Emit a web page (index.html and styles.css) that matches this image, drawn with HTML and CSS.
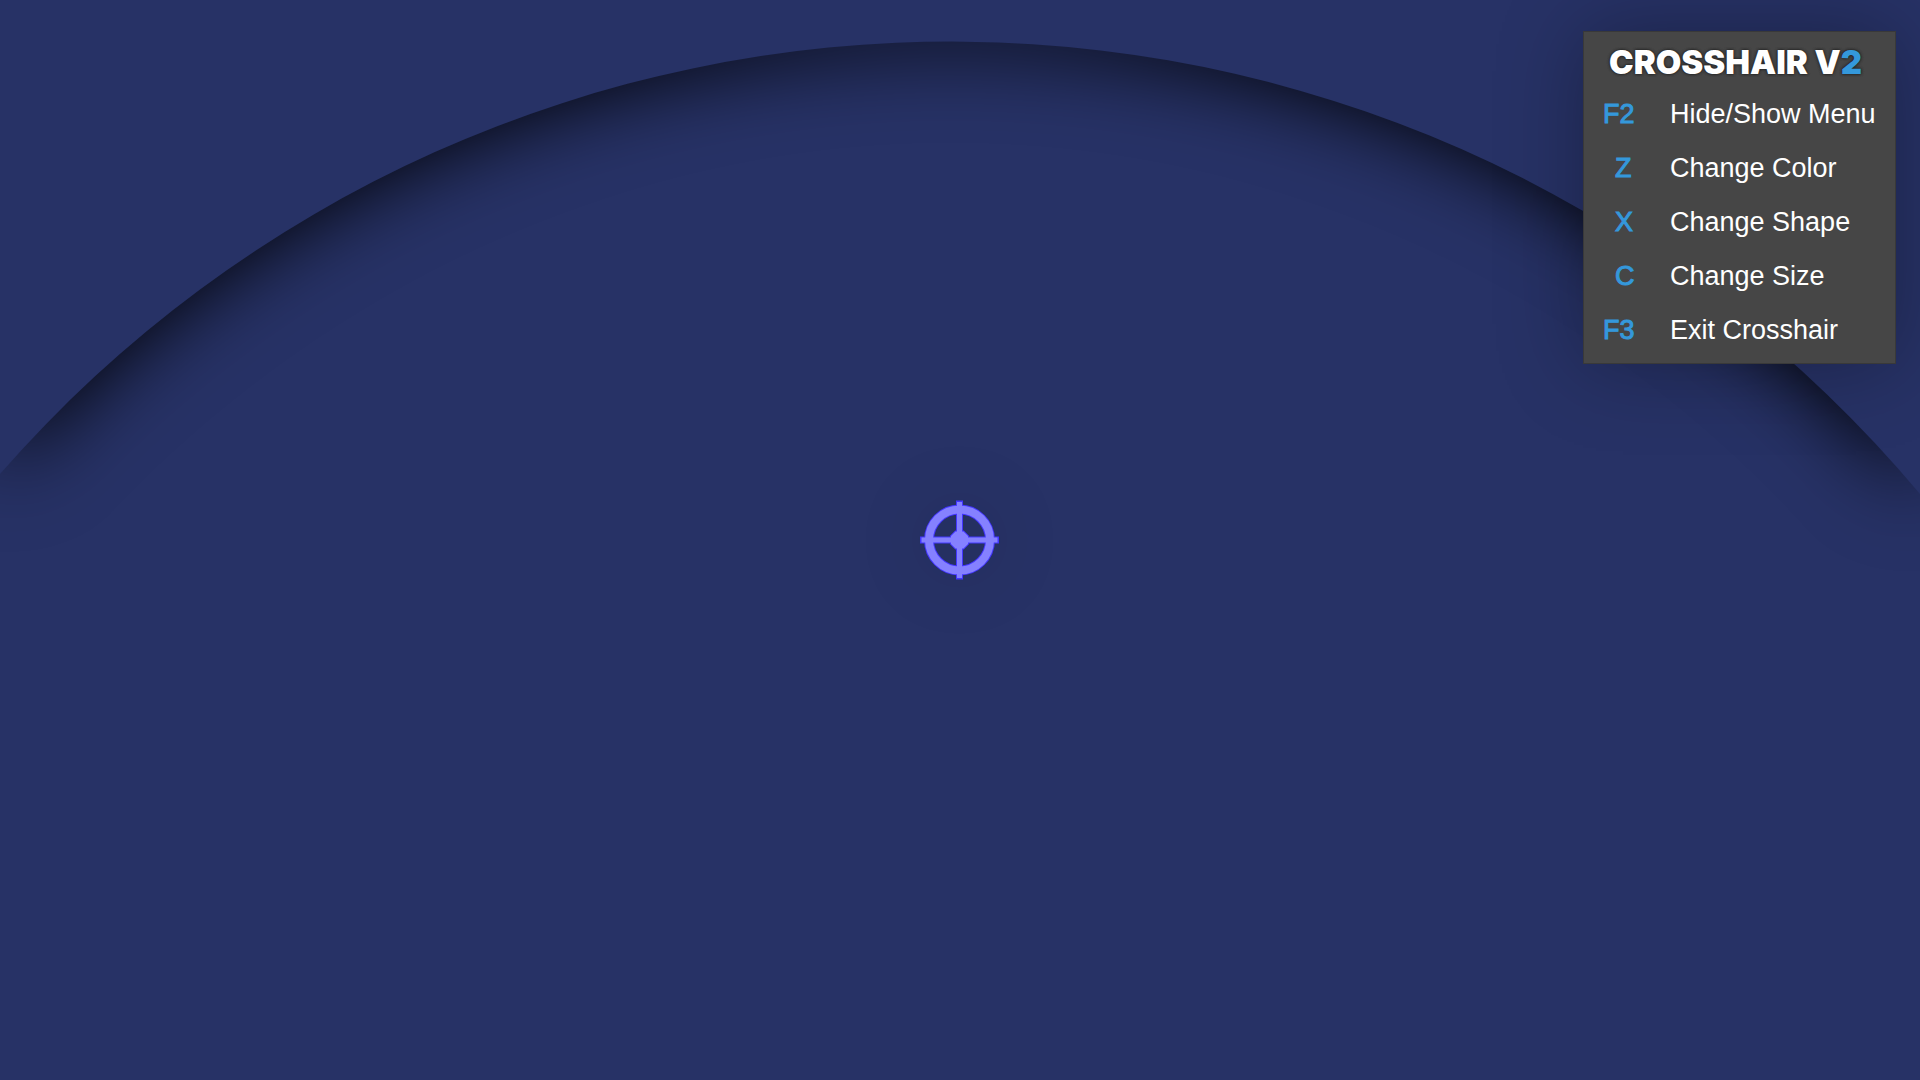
FILE: index.html
```
<!DOCTYPE html>
<html lang="en">

<head>
	<meta charset="UTF-8">
	<meta name="viewport" content="width=device-width, initial-scale=1.0">
	<title>Crosshair V2</title>
	<link rel="stylesheet" href="styles.css">
</head>

<body>
	<svg class="backdrop" viewBox="0 0 1920 1080" preserveAspectRatio="xMidYMid slice" aria-hidden="true">
		<path class="arc" d="M0 0H1920V494A1263 1263 0 0 0 0 474Z" />
	</svg>

	<main class="overlay">
		<svg class="crosshair" viewBox="0 0 80 80" role="img" aria-label="Crosshair">
			<g class="outline">
				<circle cx="39.5" cy="40" r="30.5" />
				<path d="M39.5 .5V79.5M0 40H79" />
				<path class="dot" d="M36 32.5H43L47 36.5V43.5L43 47.5H36L32 43.5V36.5Z" />
			</g>
			<g class="fill">
				<circle cx="39.5" cy="40" r="30.5" />
				<path d="M39.5 2V78M1.500 40H77.500" />
				<path class="dot" d="M36 32.5H43L47 36.5V43.5L43 47.5H36L32 43.5V36.5Z" />
			</g>
		</svg>
	</main>

	<aside class="menu">
		<h1>CROSSHAIR V<span>2</span></h1>
		<dl>
			<dt>F2</dt>
			<dd>Hide/Show Menu</dd>
			<dt class="letter">Z</dt>
			<dd>Change Color</dd>
			<dt class="letter">X</dt>
			<dd>Change Shape</dd>
			<dt class="letter">C</dt>
			<dd>Change Size</dd>
			<dt>F3</dt>
			<dd>Exit Crosshair</dd>
		</dl>
	</aside>
</body>

</html>
```
FILE: styles.css
```
html,
body {
	box-sizing: border-box;
	margin: 0;
	height: 100%;
	overflow: hidden;
	background-color: #273266;
	color: white;
	font-family: "Liberation Sans", Arial, sans-serif;
	font-size: 27px;
}

.backdrop {
	position: absolute;
	top: 0;
	left: 0;
	width: 100%;
	height: 100%;
}

.arc {
	fill: #273266;
	filter: drop-shadow(0 0 42px black);
}

.overlay {
	position: relative;
	display: flex;
	align-items: center;
	justify-content: center;
	height: 100%;
}

.crosshair {
	width: 80px;
	height: 80px;
	overflow: visible;
	filter: drop-shadow(0 0 34px rgba(0, 0, 0, 0.15));
}

.crosshair g {
	fill: none;
}

.outline {
	stroke: #4336ff;
	stroke-width: 10;
}

.outline path {
	stroke-width: 7;
}

.outline .dot {
	fill: #4336ff;
	stroke-width: 4;
}

.fill {
	stroke: #8581ff;
	stroke-width: 8;
}

.fill path {
	stroke-width: 5;
}

.fill .dot {
	fill: #8581ff;
	stroke-width: 2;
}

.menu {
	position: absolute;
	top: 31px;
	right: 24px;
	box-sizing: border-box;
	width: 313px;
	padding: 12px 19px 6px;
	border: 1px solid #393939;
	background-color: #464646;
	box-shadow: 0 0 80px rgba(0, 0, 0, 0.3);
}

.menu h1 {
	margin: 0;
	padding-left: 6px;
	font-family: Inter, sans-serif;
	font-size: 33px;
	font-weight: 900;
	line-height: 36px;
	white-space: nowrap;
	text-shadow: 0 0 3px #222, 0 0 3px #222;
}

.menu h1 span {
	color: #3498db;
}

.menu dl {
	display: grid;
	grid-template-columns: 32px auto;
	column-gap: 35px;
	margin: 7px 0 0;
	line-height: 54px;
	white-space: nowrap;
}

.menu dt {
	color: #3498db;
	-webkit-text-stroke: 1px #3498db;
}

.menu .letter {
	padding-left: 12px;
}

.menu dd {
	margin: 0;
}
```
